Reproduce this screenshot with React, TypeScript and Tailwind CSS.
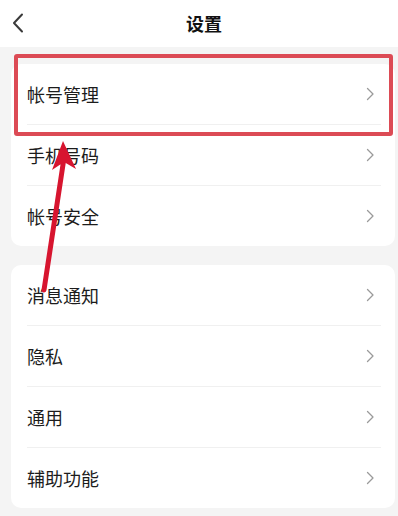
import React from "react";

const Chevron = () => (
  <svg width="9" height="14" viewBox="0 0 9 14" fill="none">
    <path d="M1.5 1.5 L7 7 L1.5 12.5" stroke="#9a9a9a" strokeWidth="1.3" strokeLinecap="round" strokeLinejoin="round" />
  </svg>
);

const Row = ({ label, last }: { label: string; last?: boolean }) => (
  <div>
    <div className="flex h-[60px] items-center justify-between pl-4 pr-[20px]">
      <span className="text-[18px] text-[#1c1c1c]">{label}</span>
      <Chevron />
    </div>
    {!last && <div className="ml-4 mr-[14px] h-px bg-[#f0f0f0]" />}
  </div>
);

const Card = ({ items }: { items: string[] }) => (
  <div className="ml-[11px] mr-[3px] rounded-[10px] bg-white">
    {items.map((t, i) => (
      <Row key={t} label={t} last={i === items.length - 1} />
    ))}
  </div>
);

export default function App() {
  return (
    <div
      className="relative h-[516px] w-[398px] overflow-hidden bg-[#f4f4f4]"
      style={{ fontFamily: '"Noto Sans CJK SC", "Noto Sans", sans-serif' }}
    >
      <div className="relative flex h-[47px] items-center justify-center bg-white pl-[10px]">
        <svg className="absolute left-[12px] top-[13px]" width="12" height="20" viewBox="0 0 12 20" fill="none">
          <path d="M10 1.5 L2 10 L10 18.5" stroke="#3a3a3a" strokeWidth="2" strokeLinecap="round" strokeLinejoin="round" />
        </svg>
        <span className="text-[18px] font-semibold text-[#111]">设置</span>
      </div>
      <div className="mt-[17px]">
        <Card items={["帐号管理", "手机号码", "帐号安全"]} />
      </div>
      <div className="mt-[19px]">
        <Card items={["消息通知", "隐私", "通用", "辅助功能"]} />
      </div>

      <div className="pointer-events-none absolute left-[14px] top-[54px] h-[82px] w-[379px] rounded-[3px] border-[4px] border-[#dc4b55]" />
      <svg className="pointer-events-none absolute left-0 top-0" width="398" height="516" viewBox="0 0 398 516">
        <line x1="44" y1="290" x2="64" y2="158" stroke="#d7152f" strokeWidth="5" strokeLinecap="round" />
        <polygon points="63,141 52,170 64,162 76,169" fill="#d7152f" />
      </svg>
    </div>
  );
}
